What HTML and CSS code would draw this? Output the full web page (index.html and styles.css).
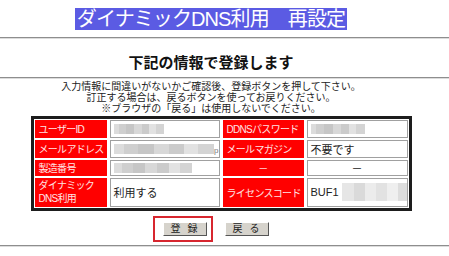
FILE: index.html
```html
<!DOCTYPE html>
<html lang="ja">

<head>
  <meta charset="UTF-8" />
  <title>ダイナミックDNS利用 再設定</title>
  <link rel="stylesheet" href="styles.css">
</head>

<body>

  <!-- Page title -->
  <div class="col title-wrap">
    <span class="page-title">ダイナミックDNS利用　再設定</span>
  </div>
  <hr class="rule rule-top">

  <div class="col">
    <h2 class="heading">下記の情報で登録します</h2>
  </div>
  <hr class="rule rule-mid">

  <div class="col notes">
    <p>入力情報に間違いがないかご確認後、登録ボタンを押して下さい。</p>
    <p>訂正する場合は、戻るボタンを使ってお戻りください。</p>
    <p>※ブラウザの「戻る」は使用しないでください。</p>
  </div>

  <!-- Confirm table -->
  <div class="col">
    <div class="info">
      <div class="label">ユーザーID</div>
      <div class="value"><span class="blur blur-id"></span></div>
      <div class="label">DDNSパスワード</div>
      <div class="value"><span class="blur blur-pw"></span></div>

      <div class="label">メールアドレス</div>
      <div class="value"><span class="blur blur-mail"></span><span class="tail">p</span></div>
      <div class="label">メールマガジン</div>
      <div class="value">不要です</div>

      <div class="label">製造番号</div>
      <div class="value"><span class="blur blur-serial"></span></div>
      <div class="label center">－</div>
      <div class="value center">－</div>

      <div class="label two-line">ダイナミック<br>DNS利用</div>
      <div class="value">利用する</div>
      <div class="label">ライセンスコード</div>
      <div class="value">BUF1<span class="blur blur-code"></span></div>
    </div>
  </div>

  <div class="col actions">
    <div class="focus-box">
      <button class="btn">登 録</button>
    </div>
    <button class="btn">戻 る</button>
  </div>
  <hr class="rule rule-bottom">

</body>

</html>
```

FILE: styles.css
```css
* {
  margin: 0;
  padding: 0;
  box-sizing: border-box;
}

body {
  width: 449px;
  background: #fff;
  color: #111;
  font-family: "Liberation Sans", "Noto Sans CJK JP", sans-serif;
}

/* content column is a bit narrower than the window */
.col {
  width: 422px;
  text-align: center;
}

/* === Title === */
.title-wrap {
  padding-top: 8px;
  height: 30px;
}

.page-title {
  display: inline-block;
  height: 22px;
  padding: 0 2px;
  background: #5b5be3;
  color: #fff;
  font-size: 20px;
  line-height: 22px;
  letter-spacing: -0.9px;
}

/* === Rules === */
.rule {
  border: none;
  border-top: 1px solid #8e8e8e;
  border-bottom: 1px solid #dcdcdc;
  height: 2px;
}

.rule-top {
  margin-top: 7px;
}

.heading {
  font-size: 15px;
  font-weight: bold;
  line-height: 20px;
  margin-top: 14px;
  height: 23px;
}

.rule-mid {
  margin-top: 1px;
}

/* === Notes === */
.notes {
  margin-top: 2px;
  font-size: 10px;
  line-height: 11.2px;
  color: #222;
}

/* === Info table === */
.info {
  display: inline-grid;
  grid-template-columns: 72px 110px 81px 101px;
  grid-template-rows: 18px 18px 16px 29px;
  column-gap: 3px;
  row-gap: 2px;
  padding: 1px;
  margin-top: 1px;
  margin-left: 20px;
  border: 3px solid #1d1d1d;
  background: #fff;
  text-align: left;
  font-size: 11px;
}

.label {
  background: #f00;
  color: #ffe4e4;
  display: flex;
  align-items: center;
  padding-left: 4px;
  white-space: nowrap;
  overflow: hidden;
  font-size: 10px;
  letter-spacing: -0.7px;
}

.label.two-line {
  line-height: 13px;
}

.value {
  border: 1px solid #a0a0a0;
  display: flex;
  align-items: center;
  padding-left: 3px;
  color: #222;
}

.center {
  justify-content: center;
  padding-left: 0;
}

/* blurred-out values */
.blur {
  display: inline-block;
  height: 10px;
  background: linear-gradient(90deg,
      #dcdcdc 0 10%, #cfcfcf 10% 24%, #c6c6c6 24% 40%, #d8d8d8 40% 55%,
      #cbcbcb 55% 70%, #e2e2e2 70% 84%, #d4d4d4 84% 100%);
}

.blur-id {
  width: 50px;
}

.blur-pw {
  width: 54px;
}

.blur-mail {
  width: 102px;
}

.blur-serial {
  width: 78px;
}

.blur-code {
  width: 72px;
  height: 18px;
  margin-left: 3px;
  background: linear-gradient(90deg,
      #e6e6e6 0 18%, #dadada 18% 36%, #ececec 36% 52%, #e2e2e2 52% 70%,
      #efefef 70% 86%, #dddddd 86% 100%);
}

.tail {
  font-size: 8px;
  color: #777;
  margin-top: 3px;
}

/* === Buttons === */
.actions {
  display: flex;
  justify-content: center;
  align-items: center;
  gap: 12px;
  margin-top: 5px;
  height: 26px;
}

.focus-box {
  border: 2px solid #d7262f;
  width: 60px;
  height: 26px;
  display: flex;
  align-items: center;
  justify-content: flex-end;
  padding-right: 4px;
}

.btn {
  width: 44px;
  height: 14px;
  background: #d6d3cc;
  border: 1px solid;
  border-color: #fff #555 #555 #fff;
  font-family: "Liberation Sans", "Noto Sans CJK JP", sans-serif;
  font-size: 10px;
  line-height: 12px;
  color: #222;
  letter-spacing: 2px;
}

.rule-bottom {
  margin-top: 3px;
}
```
